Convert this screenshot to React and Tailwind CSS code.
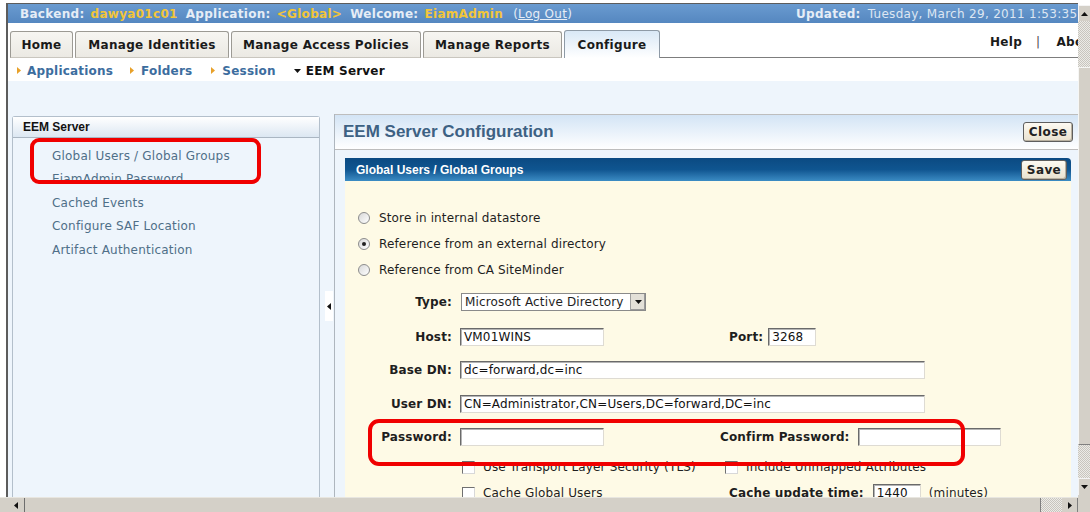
import React from "react";

const V = "font-['DejaVu_Sans',Verdana,sans-serif]";
const A = "font-['Liberation_Sans',Arial,sans-serif]";

function Arrow({ dir = "right", className = "" }) {
  const paths = {
    right: "M0 0 L4 3.5 L0 7 Z",
    left: "M4 0 L0 3.5 L4 7 Z",
    up: "M0 4 L3.5 0 L7 4 Z",
    down: "M0 0 L7 0 L3.5 4 Z",
  };
  const size = dir === "up" || dir === "down" ? { w: 7, h: 4 } : { w: 4, h: 7 };
  return (
    <svg width={size.w} height={size.h} viewBox={`0 0 ${size.w} ${size.h}`} className={className}>
      <path d={paths[dir]} fill="currentColor" />
    </svg>
  );
}

function Radio({ checked }) {
  return (
    <span className="w-[12px] h-[12px] rounded-full border border-[#8c8c8c] bg-gradient-to-br from-[#d8d8d8] to-white flex items-center justify-center shrink-0">
      {checked && <span className="w-[4px] h-[4px] rounded-full bg-[#222]" />}
    </span>
  );
}

function Check() {
  return (
    <span className="w-[13px] h-[13px] border border-t-[#707070] border-l-[#707070] border-b-[#d8d8d8] border-r-[#d8d8d8] bg-white shrink-0" />
  );
}

function Field({ w, value = "" }) {
  return (
    <div
      className={`h-[18px] ${w} bg-white border border-t-[#6a6a6a] border-l-[#6a6a6a] border-b-[#dedbd3] border-r-[#dedbd3] shadow-[inset_1px_1px_0_#b4b4b4] px-[3px] flex items-center text-[12px] text-[#111] whitespace-nowrap overflow-hidden ${V}`}
    >
      {value}
    </div>
  );
}

function Label({ children, className = "" }) {
  return <span className={`font-bold text-[12px] text-[#1e1e1e] whitespace-nowrap ${V} ${className}`}>{children}</span>;
}

function Btn({ children, w }) {
  return (
    <div
      className={`${w} h-[20px] rounded-[3px] border border-[#5e5e5e] bg-gradient-to-b from-[#fdfaf2] to-[#e9e1cf] shadow-[inset_-1px_-1px_0_#b9b1a0] flex items-center justify-center text-[12px] font-bold text-[#222] tracking-[0.4px] ${V}`}
    >
      {children}
    </div>
  );
}

const tabs = [
  { label: "Home", w: "w-[63px]" },
  { label: "Manage Identities", w: "w-[154px]" },
  { label: "Manage Access Policies", w: "w-[190px]" },
  { label: "Manage Reports", w: "w-[139px]" },
];

const sideLinks = [
  "Global Users / Global Groups",
  "EiamAdmin Password",
  "Cached Events",
  "Configure SAF Location",
  "Artifact Authentication",
];

export default function App() {
  return (
    <div className="w-[1090px] h-[512px] overflow-hidden bg-white flex relative">
      {/* page + horizontal scroll */}
      <div className="w-[1078px] h-full flex flex-col">
        <div className="flex-1 min-h-0 pt-[3px] pl-[6px] flex flex-col">
          <div className="flex-1 min-h-0 flex flex-col border-l-2 border-t border-[#5c5c5c]">
            {/* status bar */}
            <div className={`h-[19px] shrink-0 bg-gradient-to-b from-[#6a9bd0] to-[#5587c0] flex items-center pl-[12px] text-[12px] tracking-[0.3px] whitespace-nowrap overflow-hidden ${V}`}>
              <div className="w-[776px] shrink-0 flex items-center">
                <span className="font-bold text-[#e6edf6]">Backend:</span>
                <span className="font-bold text-[#f2c53a] ml-[6px]">dawya01c01</span>
                <span className="font-bold text-[#e6edf6] ml-[8px]">Application:</span>
                <span className="font-bold text-[#f2c53a] ml-[6px]">&lt;Global&gt;</span>
                <span className="font-bold text-[#e6edf6] ml-[8px]">Welcome:</span>
                <span className="font-bold text-[#f2c53a] ml-[6px]">EiamAdmin</span>
                <span className="text-[#e6edf6] ml-[10px]">
                  (<span className="underline">Log Out</span>)
                </span>
              </div>
              <span className="font-bold text-[#e6edf6]">Updated:</span>
              <span className="text-[#dde6f2] ml-[7px]">Tuesday, March 29, 2011 1:53:35 PM</span>
            </div>

            {/* tabs */}
            <div className="h-[35px] shrink-0 flex items-end pl-[2px]">
              {tabs.map((t) => (
                <div
                  key={t.label}
                  className={`${t.w} h-[27px] mr-[2px] rounded-t-[3px] border border-[#9c9a94] border-b-[#c9c6be] bg-gradient-to-b from-[#f7f6f2] to-[#ebe9e3] flex items-center justify-center text-[12px] font-bold tracking-[0.3px] text-[#1a1a1a] ${V}`}
                >
                  {t.label}
                </div>
              ))}
              <div
                className={`w-[96px] h-[28px] rounded-t-[3px] border border-b-0 border-[#8e9aa6] bg-gradient-to-b from-[#d9e8f6] to-white flex items-center justify-center text-[12px] font-bold tracking-[0.3px] text-[#1a1a1a] ${V}`}
              >
                Configure
              </div>
              <div className={`flex-1 h-full border-b border-[#7d7d7d] flex items-center pl-[330px] pt-[4px] whitespace-nowrap overflow-hidden text-[12px] font-bold tracking-[0.3px] text-[#1a1a1a] ${V}`}>
                <span>Help</span>
                <span className="ml-[14px] font-normal text-[#4a4a4a]">|</span>
                <span className="ml-[16px]">About</span>
              </div>
            </div>

            {/* sub navigation */}
            <div className={`h-[23px] shrink-0 flex items-center pl-[9px] pt-[2px] text-[12px] font-bold tracking-[0.2px] ${V}`}>
              <Arrow dir="right" className="text-[#e8a12a]" />
              <span className="ml-[6px] text-[#3c6d9e]">Applications</span>
              <Arrow dir="right" className="text-[#e8a12a] ml-[17px]" />
              <span className="ml-[7px] text-[#3c6d9e]">Folders</span>
              <Arrow dir="right" className="text-[#e8a12a] ml-[19px]" />
              <span className="ml-[7px] text-[#3c6d9e]">Session</span>
              <Arrow dir="down" className="text-[#111] ml-[18px]" />
              <span className="ml-[5px] text-[#111]">EEM Server</span>
            </div>

            {/* workspace */}
            <div className="flex-1 min-h-0 bg-[#eef5fc] flex">
              {/* left navigation panel */}
              <div className="ml-[4px] mt-[35px] w-[308px] shrink-0 border border-b-0 border-[#b3bfcb] rounded-t-[3px] flex flex-col">
                <div className={`h-[21px] bg-gradient-to-b from-white to-[#dce7f2] border-b border-[#aab6c2] flex items-center pl-[10px] text-[12px] font-bold text-[#111] ${A}`}>
                  EEM Server
                </div>
                <div className={`pt-[6px] pl-[39px] flex flex-col text-[12px] tracking-[0.2px] text-[#4f6f88] ${V}`}>
                  {sideLinks.map((s) => (
                    <div key={s} className="h-[23.5px] flex items-center whitespace-nowrap">
                      {s}
                    </div>
                  ))}
                </div>
              </div>

              {/* collapse handle */}
              <div className="w-[14px] shrink-0 flex flex-col items-center pt-[210px]">
                <div className="w-[8px] h-[30px] bg-white flex items-center justify-center ml-[3px]">
                  <Arrow dir="left" className="text-[#111]" />
                </div>
              </div>

              {/* configuration panel */}
              <div className="flex-1 min-w-0 pt-[33px] flex flex-col">
                <div className="flex-1 min-h-0 border-l border-[#aeb6be] flex flex-col">
                  <div className="h-[36px] shrink-0 border-t border-b border-[#bdbdbd] bg-gradient-to-b from-[#d3e4f5] to-white flex items-center justify-between pl-[8px] pr-[5px]">
                    <span className={`text-[17px] font-bold text-[#3d6183] ${A}`}>EEM Server Configuration</span>
                    <Btn w="w-[50px]">Close</Btn>
                  </div>

                  <div className="flex-1 min-h-0 pt-[8px] pl-[10px] pr-[7px] flex flex-col">
                    <div className="h-[23px] shrink-0 rounded-tr-[4px] bg-gradient-to-b from-[#0b4a82] via-[#0f5590] to-[#3b8cc4] flex items-center justify-between pl-[11px] pr-[4px]">
                      <span className={`text-[12px] font-bold text-white ${A}`}>Global Users / Global Groups</span>
                      <Btn w="w-[46px]">Save</Btn>
                    </div>

                    <div className={`flex-1 min-h-0 bg-[#fefae6] text-[12px] tracking-[0.15px] text-[#1e1e1e] ${V}`}>
                      {/* directory source */}
                      <div className="pt-[24px] pl-[13px] flex flex-col">
                        {[
                          ["Store in internal datastore", false],
                          ["Reference from an external directory", true],
                          ["Reference from CA SiteMinder", false],
                        ].map(([t, c]) => (
                          <div key={t} className="h-[26px] flex items-center">
                            <Radio checked={c} />
                            <span className="ml-[9px]">{t}</span>
                          </div>
                        ))}
                      </div>

                      {/* connection settings */}
                      <div className="pt-[10px] flex flex-col">
                        <div className="h-[18px] flex items-center">
                          <Label className="w-[107px] text-right">Type:</Label>
                          <div className="ml-[9px] w-[185px] h-[18px] bg-white border border-[#8a8a8a] flex items-center">
                            <span className="flex-1 pl-[3px] whitespace-nowrap overflow-hidden">Microsoft Active Directory</span>
                            <span className="w-[15px] h-[16px] shrink-0 bg-[#e3e0d8] border-l border-[#a0a0a0] shadow-[inset_-1px_-1px_0_#9a9a9a] flex items-center justify-center">
                              <Arrow dir="down" className="text-[#111]" />
                            </span>
                          </div>
                        </div>

                        <div className="h-[18px] mt-[17px] flex items-center">
                          <Label className="w-[107px] text-right">Host:</Label>
                          <div className="ml-[8px]"><Field w="w-[144px]" value="VM01WINS" /></div>
                          <Label className="ml-[125px]">Port:</Label>
                          <div className="ml-[5px]"><Field w="w-[48px]" value="3268" /></div>
                        </div>

                        <div className="h-[18px] mt-[15px] flex items-center">
                          <Label className="w-[107px] text-right">Base DN:</Label>
                          <div className="ml-[8px]"><Field w="w-[465px]" value="dc=forward,dc=inc" /></div>
                        </div>

                        <div className="h-[18px] mt-[16px] flex items-center">
                          <Label className="w-[107px] text-right">User DN:</Label>
                          <div className="ml-[8px]"><Field w="w-[465px]" value="CN=Administrator,CN=Users,DC=forward,DC=inc" /></div>
                        </div>

                        <div className="h-[18px] mt-[15px] flex items-center">
                          <Label className="w-[107px] text-right">Password:</Label>
                          <div className="ml-[8px]"><Field w="w-[144px]" /></div>
                          <Label className="ml-[116px]">Confirm Password:</Label>
                          <div className="ml-[8px]"><Field w="w-[143px]" /></div>
                        </div>

                        <div className="h-[14px] mt-[14px] flex items-center">
                          <div className="w-[380px] flex items-center pl-[117px]">
                            <Check />
                            <span className="ml-[8px] whitespace-nowrap">Use Transport Layer Security (TLS)</span>
                          </div>
                          <Check />
                          <span className="ml-[8px] whitespace-nowrap">Include Unmapped Attributes</span>
                        </div>

                        <div className="h-[18px] mt-[10px] flex items-center">
                          <div className="w-[384px] flex items-center pl-[117px]">
                            <Check />
                            <span className="ml-[8px] whitespace-nowrap">Cache Global Users</span>
                          </div>
                          <Label>Cache update time:</Label>
                          <div className="ml-[9px]"><Field w="w-[48px]" value="1440" /></div>
                          <span className="ml-[8px]">(minutes)</span>
                        </div>
                      </div>
                    </div>
                  </div>
                </div>
              </div>
            </div>
          </div>
        </div>

        {/* horizontal scrollbar */}
        <div className="h-[15px] shrink-0 bg-[#d4d0c8] flex items-stretch pl-[8px] border-t border-[#e8e6e0]">
          <div className="w-[16px] flex items-center justify-center">
            <Arrow dir="left" className="text-[#111]" />
          </div>
          <div className="w-[1017px] border-l border-[#6e6e6e] bg-[#d4d0c8] shadow-[inset_-1px_0_0_#808080]" />
          <div className="flex-1 bg-[repeating-conic-gradient(#c8c5be_0_25%,#ecebe7_0_50%)] bg-[length:2px_2px]" />
          <div className="w-[16px] flex items-center justify-center bg-[#d4d0c8] border-r border-[#808080]">
            <Arrow dir="right" className="text-[#111]" />
          </div>
        </div>
      </div>

      {/* vertical scrollbar */}
      <div className="w-[12px] h-full flex flex-col">
        <div className="h-[5px] bg-white" />
        <div className="h-[16px] bg-[#d4d0c8] border-t border-l border-[#f4f4f4] flex items-center justify-center">
          <Arrow dir="up" className="text-[#111]" />
        </div>
        <div className="h-[46px] bg-[repeating-conic-gradient(#c8c5be_0_25%,#ecebe7_0_50%)] bg-[length:2px_2px]" />
        <div className="h-[378px] bg-[#d4d0c8] border-t border-l border-[#f6f6f4] border-b border-b-[#808080]" />
        <div className="h-[33px] bg-[repeating-conic-gradient(#c8c5be_0_25%,#ecebe7_0_50%)] bg-[length:2px_2px]" />
        <div className="h-[17px] bg-[#d4d0c8] border-t border-l border-[#f4f4f4] flex items-center justify-center">
          <Arrow dir="down" className="text-[#111]" />
        </div>
        <div className="flex-1 bg-[#d4d0c8]" />
      </div>

      {/* red call-out frames */}
      <div className="absolute left-[30px] top-[138px] w-[231px] h-[46px] border-[4px] border-[#f00000] rounded-[9px] pointer-events-none" />
      <div className="absolute left-[368px] top-[419px] w-[597px] h-[47px] border-[4px] border-[#f00000] rounded-[11px] pointer-events-none" />
    </div>
  );
}
